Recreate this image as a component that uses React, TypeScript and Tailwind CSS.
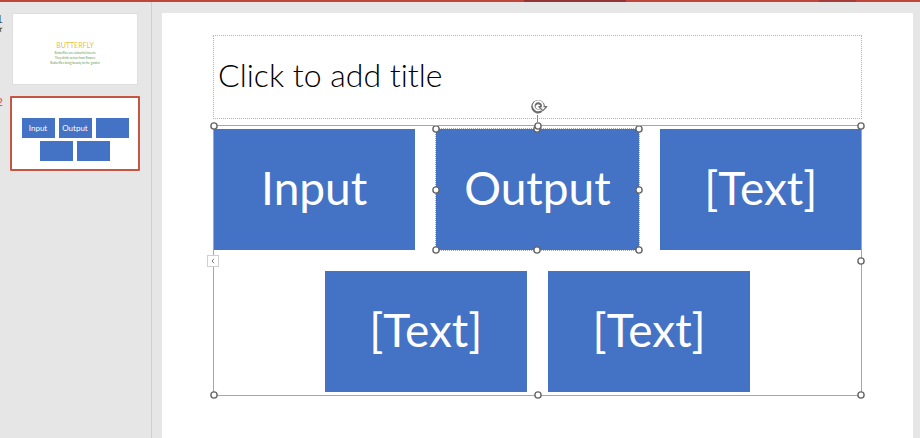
import React from 'react';
import clsx from 'clsx';

interface BlockProps {
  text: string;
  selected?: boolean;
}

const handlePositions = [
  'left-0 top-0',
  'left-1/2 top-0',
  'left-full top-0',
  'left-0 top-1/2',
  'left-full top-1/2',
  'left-0 top-full',
  'left-1/2 top-full',
  'left-full top-full',
];

const Handles: React.FC = () => (
  <>
    {handlePositions.map((position) => (
      <svg
        key={position}
        viewBox="0 0 8 8"
        className={clsx('absolute h-2 w-2 -translate-x-1/2 -translate-y-1/2', position)}
        aria-hidden="true"
      >
        <circle cx="4" cy="4" r="3.1" fill="#fff" stroke="#666666" strokeWidth="1.4" />
      </svg>
    ))}
  </>
);

const RotateIcon: React.FC = () => (
  <svg
    viewBox="0 0 20 16"
    className="block h-4 w-5"
    fill="none"
    aria-hidden="true"
  >
    <path d="M13 11.2A4.6 4.6 0 1 1 14.6 7.6" stroke="#6b6b6b" strokeWidth="4.4" />
    <path
      d="M10.8 7.6h8l-3.9 4z"
      fill="#fff"
      stroke="#6b6b6b"
      strokeWidth="1.2"
      strokeLinejoin="round"
    />
    <path d="M12.6 10.8A4.6 4.6 0 1 1 14.6 8.4" stroke="#fff" strokeWidth="1.8" />
  </svg>
);

const Block: React.FC<BlockProps> = ({ text, selected }) => (
  <div className="relative flex h-[121px] w-[calc((100%-42px)/3)] items-center justify-center bg-[#4472c4] pb-1 text-[46px] text-white">
    <span>{text}</span>
    {selected && (
      <div className="absolute -inset-px border border-dotted border-[#a5a5bd]">
        <Handles />
      </div>
    )}
  </div>
);

const MiniBlock: React.FC<{ text?: string }> = ({ text }) => (
  <span className="flex h-5 w-[33px] items-center justify-center bg-[#4472c4] text-[8px] leading-none text-white">
    {text}
  </span>
);

const Thumbnails: React.FC = () => (
  <nav
    aria-label="Slides"
    className="flex w-[152px] shrink-0 flex-col gap-[11px] border-r border-[#cfcfcf] pt-[11px]"
  >
    <div className="flex gap-2">
      <span className="-ml-1 flex w-2 shrink-0 flex-col text-xs leading-3 text-[#444444]">
        1
        <svg viewBox="0 0 8 8" className="h-2 w-2" fill="#555555" aria-hidden="true">
          <path d="m3 0 1 2.7h2.9L4.6 4.4l.9 2.8L3 5.5.5 7.2l.9-2.8L-.9 2.7H2z" />
        </svg>
      </span>
      <button
        type="button"
        className="flex h-[72px] w-[126px] flex-col items-center border border-[#dedede] bg-white pt-[27px]"
      >
        <span className="text-[7px] leading-[8px] text-[#e8bf45]">BUTTERFLY</span>
        <span className="mt-[2px] text-center text-[3px] leading-[5px] text-[#5b9a55]">
          Butterflies are colourful insects
          <br />
          They drink nectar from flowers
          <br />
          Butterflies bring beauty to the garden
        </span>
      </button>
    </div>
    <div className="flex gap-[6px]">
      <span className="-ml-1 w-2 shrink-0 text-xs leading-3 text-[#e0593b]">2</span>
      <button
        type="button"
        aria-current="true"
        className="flex h-[75px] w-[130px] flex-col gap-[3px] rounded-[1px] border-2 border-[#c65543] bg-white pt-5"
      >
        <span className="flex w-full justify-center gap-1">
          <MiniBlock text="Input" />
          <MiniBlock text="Output" />
          <MiniBlock />
        </span>
        <span className="flex w-full justify-center gap-1">
          <MiniBlock />
          <MiniBlock />
        </span>
      </button>
    </div>
  </nav>
);

const App: React.FC = () => (
  <div className="flex min-h-screen flex-col overflow-hidden bg-[#e6e6e6] font-['Lato','Noto_Sans',sans-serif]">
    <header className="flex h-[2px] bg-[#c0453c]">
      <div className="ml-[57%] w-[11%] bg-[#943535]" />
      <div className="ml-[21%] w-[4%] bg-[#a43c3a]" />
    </header>
    <div className="flex flex-1">
      <Thumbnails />
      <main className="mt-[11px] mr-[7px] ml-[10px] flex-1 bg-white px-[51px] pt-[22px]">
        <h1 className="flex h-[84px] items-center border border-dotted border-[#b5b5b5] px-1 pb-[5px] text-[32px] font-light text-black [font-variant-ligatures:none]">
          Click to add title
        </h1>
        <section
          aria-label="Diagram"
          className="relative mt-[6px] flex flex-col gap-[21px] pt-[4px] pb-[4px]"
        >
          <div className="flex justify-between">
            <Block text="Input" />
            <Block text="Output" selected />
            <Block text="[Text]" />
          </div>
          <div className="flex justify-center gap-[21px]">
            <Block text="[Text]" />
            <Block text="[Text]" />
          </div>
          <div className="pointer-events-none absolute inset-0 border border-[#a6a6a6]">
            <Handles />
          </div>
          <div className="absolute -top-[26px] left-1/2 flex -translate-x-1/2 flex-col items-center">
            <RotateIcon />
            <div className="h-[7px] w-px bg-[#8a8a8a]" />
          </div>
          <button
            type="button"
            aria-label="Show text pane"
            className="absolute top-1/2 left-0 flex h-3 w-3 -translate-x-1/2 -translate-y-1/2 items-center justify-center border border-[#d0d0d0] bg-white"
          >
            <svg viewBox="0 0 6 6" className="h-[6px] w-[6px]" fill="none" stroke="#777777">
              <path d="M4 .8 2 3l2 2.2" />
            </svg>
          </button>
        </section>
      </main>
    </div>
  </div>
);

export default App;
